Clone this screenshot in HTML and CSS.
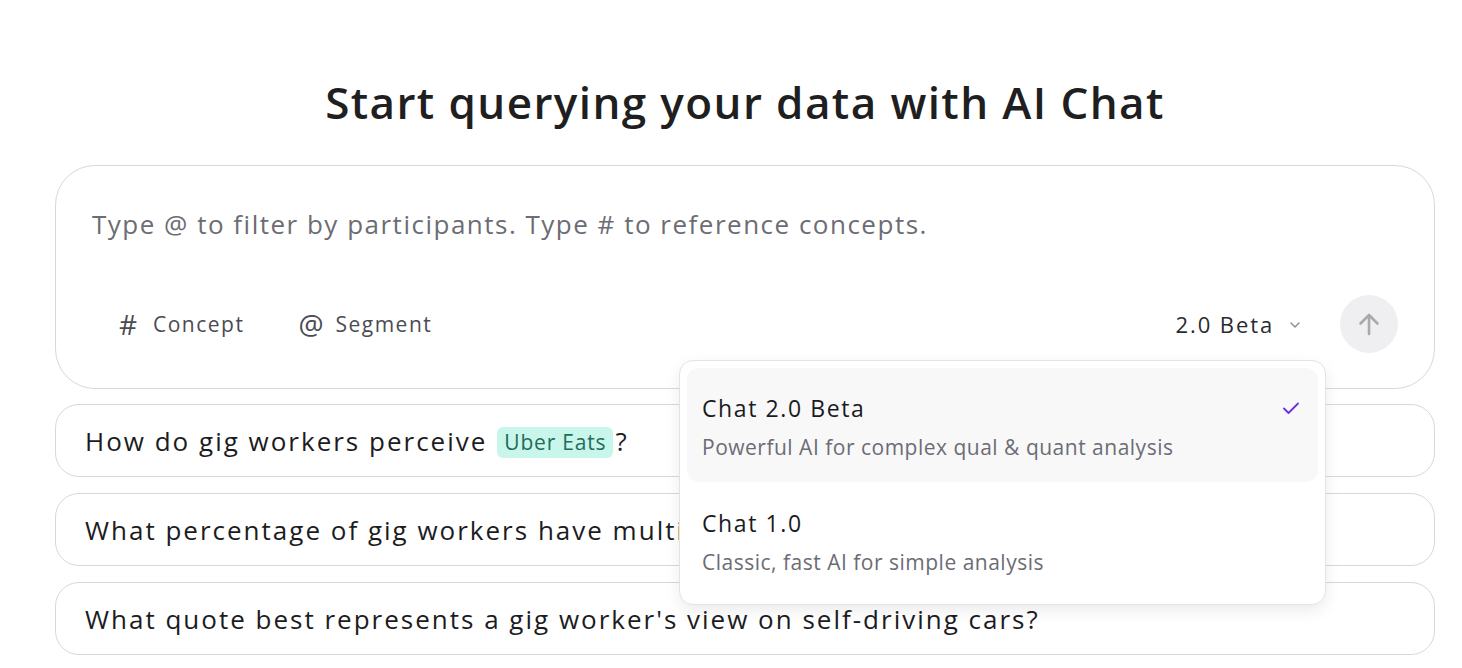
FILE: index.html
```html
<!DOCTYPE html>
<html>
<head>
<meta charset="utf-8">
<link rel="stylesheet" href="styles.css">
</head>
<body>
<main class="page">
  <h1 class="title">Start querying your data with AI Chat</h1>
  <section class="composer">
    <div class="placeholder">Type @ to filter by participants. Type # to reference concepts.</div>
    <div class="toolbar">
      <div class="tools">
        <button class="tool"><span class="tool-icon">#</span>Concept</button>
        <button class="tool"><span class="tool-icon">@</span>Segment</button>
      </div>
      <div class="actions">
        <button class="model">2.0 Beta
          <svg class="chev" width="14" height="14" viewBox="0 0 14 14"><path d="M3 5l4 4 4-4" fill="none" stroke="#8a8a92" stroke-width="1.4" stroke-linecap="round" stroke-linejoin="round"/></svg>
        </button>
        <button class="send" aria-label="Send">
          <svg width="28" height="28" viewBox="0 0 28 28"><path d="M14 24V5M5.5 13.5L14 5l8.5 8.5" fill="none" stroke="#a9a9ad" stroke-width="2.6" stroke-linecap="round" stroke-linejoin="round"/></svg>
        </button>
      </div>
    </div>
    <div class="menu">
      <div class="option selected">
        <div class="option-text">
          <div class="option-title">Chat 2.0 Beta</div>
          <div class="option-desc">Powerful AI for complex qual &amp; quant analysis</div>
        </div>
        <svg class="check" width="22" height="22" viewBox="0 0 22 22"><path d="M4 11.5l4.5 4.5L18 6.5" fill="none" stroke="#6b2fe0" stroke-width="1.8" stroke-linecap="round" stroke-linejoin="round"/></svg>
      </div>
      <div class="option">
        <div class="option-text">
          <div class="option-title">Chat 1.0</div>
          <div class="option-desc">Classic, fast AI for simple analysis</div>
        </div>
      </div>
    </div>
  </section>
  <ul class="suggestions">
    <li class="suggestion">How do gig workers perceive <span class="chip">Uber Eats</span>?</li>
    <li class="suggestion">What percentage of gig workers have multiple jobs?</li>
    <li class="suggestion">What quote best represents a gig worker's view on self-driving cars?</li>
  </ul>
</main>
</body>
</html>
```
FILE: styles.css
```css
* { box-sizing: border-box; }
html, body { margin: 0; padding: 0; background: #fff; }
body {
  font-family: "Open Sans", "Noto Sans", sans-serif;
  color: #1c1c1f;
  overflow: hidden;
}
.page {
  padding: 76px 27px 0 55px;
}
.title {
  margin: 0;
  text-align: center;
  font-size: 44px;
  font-weight: 600;
  line-height: 52px;
  color: #1f1f22;
  letter-spacing: 1.4px;
}
.composer {
  position: relative;
  margin-top: 37px;
  height: 224px;
  border: 1px solid #d8d8da;
  border-radius: 40px;
  padding: 40px 36px 0 36px;
}
.placeholder {
  font-size: 26px;
  line-height: 36px;
  color: #6c6c74;
  letter-spacing: 1.5px;
}
.toolbar {
  margin-top: 53px;
  display: flex;
  align-items: center;
  justify-content: space-between;
}
.tools { display: flex; align-items: center; gap: 54px; padding-left: 24px; }
button {
  font: inherit;
  background: none;
  border: 0;
  padding: 0;
  cursor: pointer;
}
.tool {
  display: flex;
  align-items: center;
  gap: 13px;
  font-size: 21px;
  color: #4b4b53;
  font-weight: 500;
  letter-spacing: 1.5px;
}
.tool-icon {
  font-size: 28px;
  line-height: 28px;
  color: #4b4b53;
  width: 24px;
  text-align: center;
  letter-spacing: 0;
  font-weight: 500;
}
.actions { display: flex; align-items: center; gap: 38px; }
.model {
  display: flex;
  align-items: center;
  gap: 14px;
  font-size: 22px;
  color: #2b2b2f;
  font-weight: 500;
  letter-spacing: 1.9px;
}
.chev { margin-top: 2px; }
.send {
  width: 58px;
  height: 58px;
  border-radius: 50%;
  background: #efeef1;
  display: flex;
  align-items: center;
  justify-content: center;
}
.menu {
  position: absolute;
  top: 194px;
  right: 108px;
  width: 647px;
  height: 245px;
  background: #fff;
  border: 1px solid #e3e3e6;
  border-radius: 14px;
  box-shadow: 0 6px 16px rgba(0,0,0,0.08);
  padding: 7px;
  z-index: 2;
}
.option {
  display: flex;
  align-items: flex-start;
  justify-content: space-between;
  border-radius: 12px;
  padding: 24px 16px 0 15px;
  height: 114px;
}
.option + .option { margin-top: 1px; height: 118px; }
.option.selected { background: #f8f8f9; }
.option-title {
  font-size: 23px;
  line-height: 32px;
  color: #1b1b1e;
  font-weight: 500;
  letter-spacing: 1.6px;
}
.option-desc {
  margin-top: 9px;
  font-size: 21px;
  line-height: 28px;
  color: #6c6c74;
  letter-spacing: 0.5px;
}
.check { margin-top: 5px; }
.suggestions {
  list-style: none;
  margin: 15px 0 0 0;
  padding: 0;
  display: flex;
  flex-direction: column;
  gap: 16px;
}
.suggestion {
  height: 73px;
  border: 1px solid #d8d8da;
  border-radius: 24px;
  display: flex;
  align-items: center;
  padding-left: 29px;
  font-size: 26px;
  color: #1c1c1f;
  white-space: nowrap;
  overflow: hidden;
  letter-spacing: 2px;
}
.chip {
  display: inline-block;
  margin: 4px 2px 0 10px;
  padding: 0 7px;
  background: #c8f6ea;
  color: #1f6c5c;
  border-radius: 6px;
  font-size: 21px;
  line-height: 31px;
  letter-spacing: 0.8px;
}
```
